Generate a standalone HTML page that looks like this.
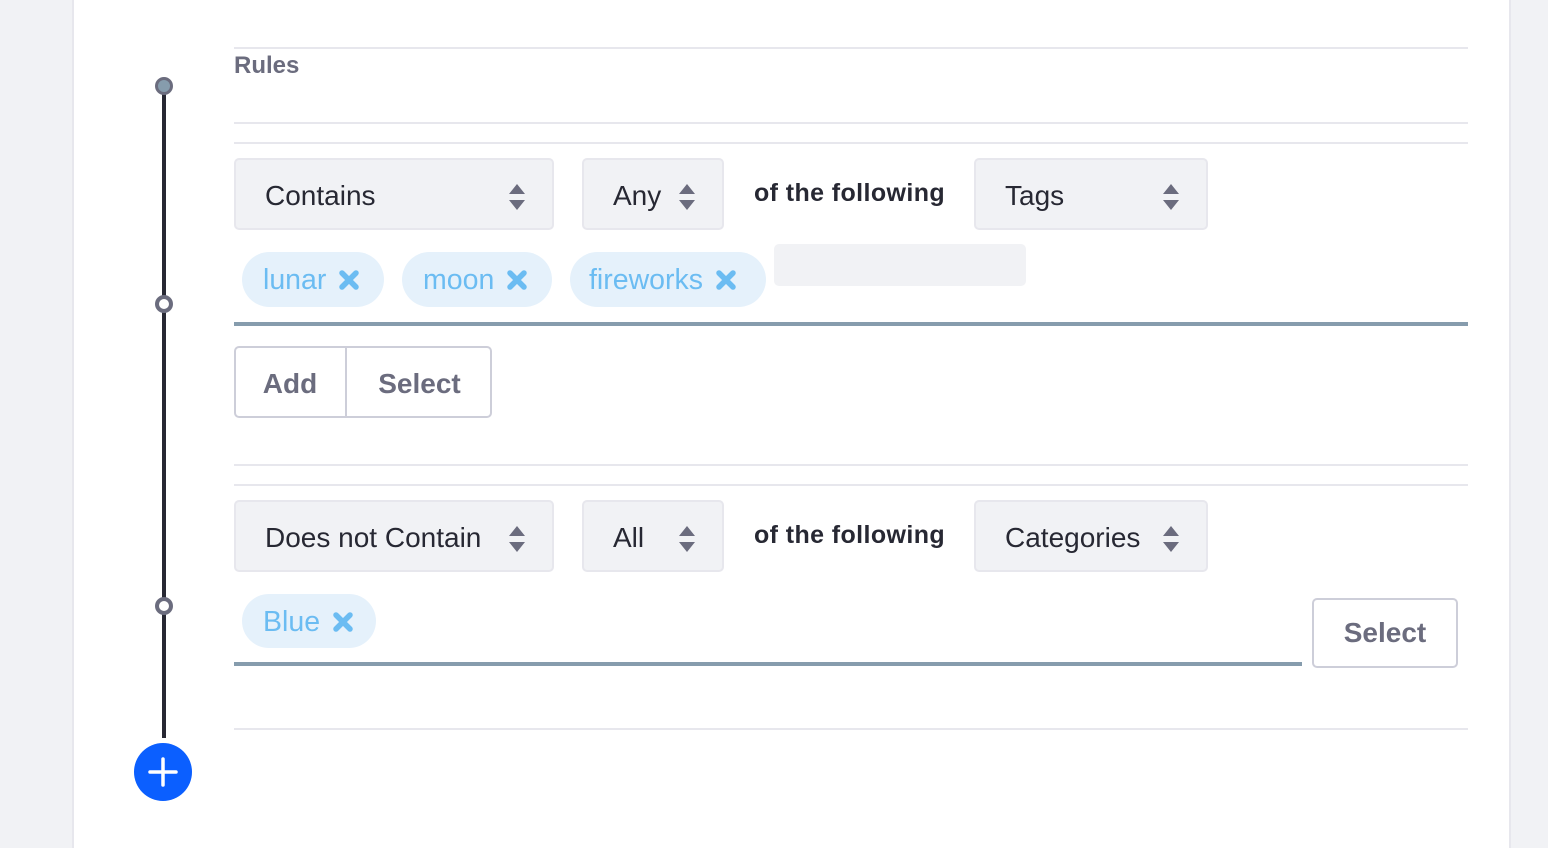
<!DOCTYPE html>
<html><head><meta charset="utf-8"><style>
*{box-sizing:border-box;margin:0;padding:0}
body{width:1548px;height:848px;background:#f1f2f5;position:relative;overflow:hidden;font-family:"Liberation Sans",sans-serif}
.card{position:absolute;left:72px;top:0;width:1439px;height:848px;background:#fff;border-left:2px solid #e7e7ed;border-right:2px solid #e7e7ed}
.a{position:absolute}
.hl{position:absolute;left:234px;width:1234px;height:2px;background:#e7e7ed}
.sel{position:absolute;height:72px;background:#f1f2f5;border:2px solid #e7e7ed;border-radius:5px;font-size:28px;color:#272833;line-height:72px;padding-left:29px}
.sel svg{position:absolute;right:26px;top:24px}
.of{position:absolute;font-size:25px;font-weight:bold;color:#272833;letter-spacing:0.4px}
.chip{position:absolute;height:55px;border-radius:28px;background:#e5f1fb;color:#6bbcf2;font-size:28.5px;line-height:57px;padding-left:21px;white-space:nowrap}
.chip svg{display:inline-block;vertical-align:-1px;margin-left:13px}
.btn{position:absolute;border:2px solid #cdced9;border-radius:5px;color:#6b6c7e;font-weight:bold;font-size:28px;text-align:center;line-height:66px}
</style></head><body>
<div class="card"></div>
<div class="a" style="left:162px;top:86px;width:4px;height:652px;background:#272833"></div>
<div class="a" style="left:155px;top:77px;width:18px;height:18px;border-radius:50%;background:#869cad;border:3px solid #6b6c7e"></div>
<div class="a" style="left:155px;top:295px;width:18px;height:18px;border-radius:50%;background:#fff;border:4px solid #6b6c7e"></div>
<div class="a" style="left:155px;top:597px;width:18px;height:18px;border-radius:50%;background:#fff;border:4px solid #6b6c7e"></div>
<div class="a" style="left:134px;top:743px;width:58px;height:58px;border-radius:50%;background:#0b5fff"></div>
<svg class="a" style="left:134px;top:743px" width="58" height="58"><path d="M29 16V42M16 29H42" stroke="#fff" stroke-width="3.5" stroke-linecap="round"/></svg>

<div class="hl" style="top:47px"></div>
<div class="a" style="left:234px;top:52px;font-size:24px;font-weight:bold;color:#6b6c7e">Rules</div>
<div class="hl" style="top:122px"></div>
<div class="hl" style="top:142px"></div>

<div class="sel" style="left:234px;top:158px;width:320px">Contains<svg width="18" height="26"><path d="M9 0L17 10H1Z M9 26L17 16H1Z" fill="#6b6c7e"/></svg></div>
<div class="sel" style="left:582px;top:158px;width:142px">Any<svg width="18" height="26"><path d="M9 0L17 10H1Z M9 26L17 16H1Z" fill="#6b6c7e"/></svg></div>
<div class="of" style="left:754px;top:179px">of the following</div>
<div class="sel" style="left:974px;top:158px;width:234px">Tags<svg width="18" height="26"><path d="M9 0L17 10H1Z M9 26L17 16H1Z" fill="#6b6c7e"/></svg></div>

<div class="chip" style="left:242px;top:252px;width:142px">lunar<svg width="20" height="20"><path d="M3 3L17 17M17 3L3 17" stroke="#6bbcf2" stroke-width="5.5" stroke-linecap="round"/></svg></div>
<div class="chip" style="left:402px;top:252px;width:150px">moon<svg width="20" height="20"><path d="M3 3L17 17M17 3L3 17" stroke="#6bbcf2" stroke-width="5.5" stroke-linecap="round"/></svg></div>
<div class="chip" style="left:570px;top:252px;width:196px;padding-left:19px">fireworks<svg width="20" height="20"><path d="M3 3L17 17M17 3L3 17" stroke="#6bbcf2" stroke-width="5.5" stroke-linecap="round"/></svg></div>
<div class="a" style="left:774px;top:244px;width:252px;height:42px;background:#f1f2f5;border-radius:5px"></div>
<div class="a" style="left:234px;top:322px;width:1234px;height:4px;background:#869cad"></div>

<div class="btn" style="left:234px;top:346px;width:258px;height:72px"></div>
<div class="a" style="left:345px;top:346px;width:2px;height:72px;background:#cdced9"></div>
<div class="a" style="left:234px;top:368px;width:112px;text-align:center;font-size:28px;font-weight:bold;color:#6b6c7e">Add</div>
<div class="a" style="left:347px;top:368px;width:145px;text-align:center;font-size:28px;font-weight:bold;color:#6b6c7e">Select</div>

<div class="hl" style="top:464px"></div>
<div class="hl" style="top:484px"></div>

<div class="sel" style="left:234px;top:500px;width:320px">Does not Contain<svg width="18" height="26"><path d="M9 0L17 10H1Z M9 26L17 16H1Z" fill="#6b6c7e"/></svg></div>
<div class="sel" style="left:582px;top:500px;width:142px">All<svg width="18" height="26"><path d="M9 0L17 10H1Z M9 26L17 16H1Z" fill="#6b6c7e"/></svg></div>
<div class="of" style="left:754px;top:521px">of the following</div>
<div class="sel" style="left:974px;top:500px;width:234px">Categories<svg width="18" height="26"><path d="M9 0L17 10H1Z M9 26L17 16H1Z" fill="#6b6c7e"/></svg></div>

<div class="chip" style="left:242px;top:594px;width:134px;height:54px">Blue<svg width="20" height="20"><path d="M3 3L17 17M17 3L3 17" stroke="#6bbcf2" stroke-width="5.5" stroke-linecap="round"/></svg></div>
<div class="a" style="left:234px;top:662px;width:1068px;height:4px;background:#869cad"></div>
<div class="btn" style="left:1312px;top:598px;width:146px;height:70px">Select</div>

<div class="hl" style="top:728px"></div>
</body></html>
